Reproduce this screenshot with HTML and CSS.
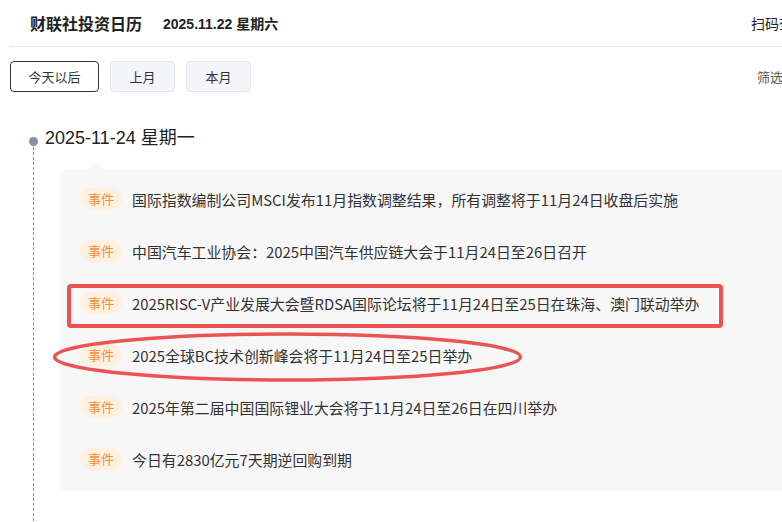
FILE: index.html
```html
<!DOCTYPE html>
<html lang="zh-CN">
<head>
    <meta charset="UTF-8">
    <meta name="viewport" content="width=device-width, initial-scale=1.0">
    <title>财联社投资日历</title>
    <link rel="stylesheet" href="styles.css">
</head>
<body>
    <div class="page">
        <div class="header">
            <h1 class="title">财联社投资日历</h1>
            <span class="today">2025.11.22 星期六</span>
            <span class="scan">扫码查看</span>
        </div>

        <div class="toolbar">
            <button class="btn btn-active">今天以后</button>
            <button class="btn">上月</button>
            <button class="btn">本月</button>
            <span class="filter">筛选条件</span>
        </div>

        <div class="timeline">
            <div class="day-title">2025-11-24 星期一</div>
            <div class="card">
                <div class="event"><span class="tag">事件</span><span class="event-text">国际指数编制公司MSCI发布11月指数调整结果，所有调整将于11月24日收盘后实施</span></div>
                <div class="event"><span class="tag">事件</span><span class="event-text">中国汽车工业协会：2025中国汽车供应链大会于11月24日至26日召开</span></div>
                <div class="event"><span class="tag">事件</span><span class="event-text">2025RISC-V产业发展大会暨RDSA国际论坛将于11月24日至25日在珠海、澳门联动举办</span></div>
                <div class="event"><span class="tag">事件</span><span class="event-text">2025全球BC技术创新峰会将于11月24日至25日举办</span></div>
                <div class="event"><span class="tag">事件</span><span class="event-text">2025年第二届中国国际锂业大会将于11月24日至26日在四川举办</span></div>
                <div class="event"><span class="tag">事件</span><span class="event-text">今日有2830亿元7天期逆回购到期</span></div>
            </div>
        </div>
    </div>

    <!-- 标注层 -->
    <svg class="marks" width="782" height="522" viewBox="0 0 782 522">
        <rect x="69" y="286" width="652" height="40" rx="2" fill="none" stroke="#ec5454" stroke-width="4"/>
        <ellipse cx="287.5" cy="357" rx="233" ry="23" fill="none" stroke="#ec5454" stroke-width="3.5"/>
    </svg>
</body>
</html>
```

FILE: styles.css
```css
html, body {
    margin: 0;
    padding: 0;
    overflow: hidden;
    background-color: #ffffff;
}
body {
    font-family: "Noto Sans CJK SC", sans-serif;
    color: #333333;
    width: 782px;
    height: 522px;
    position: relative;
}
.page {
    width: 860px;
    padding-left: 10px;
}
.header {
    display: flex;
    align-items: center;
    height: 46px;
    padding-left: 20px;
    border-bottom: 1px solid #e6e6e6;
}
.title {
    margin: 0;
    font-size: 16px;
    font-weight: bold;
    color: #222222;
}
.today {
    margin-left: 21px;
    font-family: "Liberation Sans", "Noto Sans CJK SC", sans-serif;
    font-size: 14px;
    font-weight: bold;
    color: #222222;
}
.scan {
    margin-left: auto;
    margin-right: 63px;
    font-size: 14px;
    color: #222222;
}
.toolbar {
    display: flex;
    align-items: center;
    gap: 11px;
    margin-top: 14px;
}
.btn {
    height: 31px;
    width: 65px;
    padding: 0;
    border: 1px solid #e4e6ec;
    border-radius: 4px;
    background-color: #f4f5f9;
    font-family: "Noto Sans CJK SC", sans-serif;
    font-size: 13px;
    color: #333333;
}
.btn-active {
    width: 89px;
    border-color: #333333;
    background-color: #ffffff;
}
.filter {
    margin-left: auto;
    margin-right: 61px;
    font-size: 13px;
    color: #555555;
}
.timeline {
    position: relative;
    margin-top: 34px;
    padding-left: 35px;
    height: 400px;
}
.timeline::before {
    content: "";
    position: absolute;
    left: 23px;
    top: 16px;
    bottom: 0;
    border-left: 1px dashed #8a9099;
}
.day-title {
    position: relative;
    font-family: "Liberation Sans", "Noto Sans CJK SC", sans-serif;
    font-size: 18px;
    line-height: 24px;
    color: #222222;
}
.day-title::before {
    content: "";
    position: absolute;
    left: -16px;
    top: 11px;
    width: 9px;
    height: 9px;
    border-radius: 50%;
    background-color: #8a90a0;
}
.card {
    position: relative;
    margin-top: 20px;
    margin-left: 15px;
    padding: 18px 20px 21px;
    background-color: #f7f7f7;
    border-radius: 5px;
    display: flex;
    flex-direction: column;
    gap: 30px;
}
.card::before {
    content: "";
    position: absolute;
    left: 28px;
    top: -8px;
    border-left: 8px solid transparent;
    border-right: 8px solid transparent;
    border-bottom: 8px solid #f7f7f7;
}
.event {
    display: flex;
    align-items: center;
    height: 22px;
    white-space: nowrap;
}
.tag {
    width: 42px;
    height: 22px;
    line-height: 22px;
    text-align: center;
    border-radius: 11px;
    background-color: #fff0e0;
    color: #f0903a;
    font-size: 13px;
}
.event-text {
    margin-left: 10px;
    font-size: 14.9px;
    color: #333333;
}
.marks {
    position: absolute;
    left: 0;
    top: 0;
    pointer-events: none;
}
```
